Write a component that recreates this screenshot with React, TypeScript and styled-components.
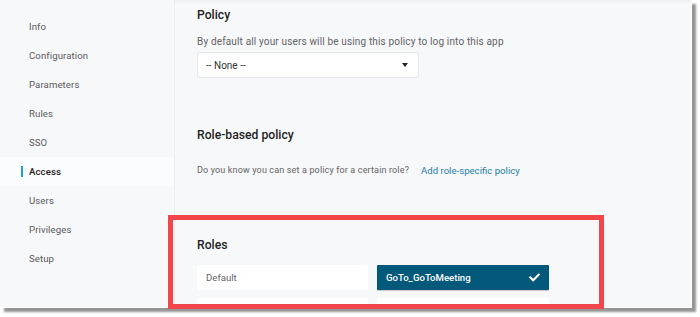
import React from 'react';
import styled, { createGlobalStyle } from 'styled-components';
import { FaCheck } from 'react-icons/fa';

const GlobalStyle = createGlobalStyle`
  html, body {
    margin: 0;
    padding: 0;
    background: #ffffff;
  }
  body {
    font-family: Roboto, "Liberation Sans", Arial, sans-serif;
  }
`;

const Stage = styled.div`
  position: relative;
  width: 700px;
  height: 317px;
  overflow: hidden;
`;

const Frame = styled.div`
  display: flex;
  width: 691px;
  height: 307px;
  border-right: 1px solid #ffffff;
  border-bottom: 1px solid #ffffff;
  box-shadow: 4px 4px 2px rgba(0, 0, 0, 0.42);
  overflow: hidden;
`;

const Sidebar = styled.nav`
  display: flex;
  flex-direction: column;
  flex: 0 0 175px;
  padding-top: 12px;
  background: #f7f8fa;
  border-right: 1px solid #eceef1;
  box-sizing: border-box;
`;

const NavItem = styled.div<{ $active?: boolean }>`
  position: relative;
  display: flex;
  align-items: center;
  height: 29px;
  padding-left: 29px;
  font-size: 9.6px;
  letter-spacing: 0.1px;
  color: ${p => (p.$active ? '#1b1b1b' : '#5a5a5a')};
  font-weight: ${p => (p.$active ? 500 : 400)};
  background: ${p => (p.$active ? '#fbfcfd' : 'transparent')};

  &::before {
    content: '';
    display: ${p => (p.$active ? 'block' : 'none')};
    position: absolute;
    left: 21px;
    top: 9px;
    width: 2px;
    height: 11px;
    background: #1ba3d8;
  }
`;

const Main = styled.main`
  flex: 1;
  display: flex;
  flex-direction: column;
  padding: 7px 0 0 22px;
  background: #f7f8fa;
  box-shadow: inset 0 4px 4px -3px rgba(0, 0, 0, 0.06);

  & > * {
    flex-shrink: 0;
  }
`;

const Heading = styled.h2<{ $top: number }>`
  margin: ${p => p.$top}px 0 0;
  font-size: 12.2px;
  font-weight: 500;
  color: #1e1e1e;
  line-height: 16px;
`;

const Description = styled.p<{ $size?: number }>`
  margin: 0;
  font-size: ${p => p.$size ?? 10}px;
  color: #636363;
  letter-spacing: 0.15px;
  line-height: 14px;
`;

const Select = styled.div`
  display: flex;
  align-items: center;
  justify-content: space-between;
  width: 222px;
  height: 26px;
  margin-top: 3px;
  padding: 0 8px;
  box-sizing: border-box;
  background: #ffffff;
  border: 1px solid #e6e8eb;
  border-radius: 2px;
  font-size: 10px;
  color: #333;
`;

const Caret = styled.span`
  width: 0;
  height: 0;
  border-left: 3px solid transparent;
  border-right: 3px solid transparent;
  border-top: 4px solid #222;
  margin-right: 2px;
`;

const InfoRow = styled.div`
  display: flex;
  align-items: center;
  gap: 12px;
  margin-top: 20px;
`;

const Link = styled.a`
  font-size: 9.6px;
  color: #1d7ea7;
  text-decoration: none;
`;

const RoleGrid = styled.div`
  display: grid;
  grid-template-columns: 171px 172px;
  column-gap: 9px;
  row-gap: 8px;
  margin-top: 12px;
`;

const RoleCard = styled.div<{ $selected?: boolean }>`
  display: flex;
  align-items: center;
  justify-content: space-between;
  height: 25px;
  padding: 0 9px 0 9px;
  box-sizing: border-box;
  border-radius: 1px;
  font-size: 9.6px;
  background: ${p => (p.$selected ? '#03597a' : '#ffffff')};
  color: ${p => (p.$selected ? '#ffffff' : '#666666')};
  font-weight: ${p => (p.$selected ? 500 : 400)};
  box-shadow: ${p => (p.$selected ? '0 1px 1px rgba(0,0,0,0.2)' : 'none')};
`;

const Highlight = styled.div`
  position: absolute;
  left: 168px;
  top: 215px;
  width: 436px;
  height: 94px;
  box-sizing: border-box;
  border: 5px solid #f2464b;
  pointer-events: none;
`;

const navItems = ['Info', 'Configuration', 'Parameters', 'Rules', 'SSO', 'Access', 'Users', 'Privileges', 'Setup'];

export default function App() {
  return (
    <>
      <GlobalStyle />
      <Stage>
        <Frame>
          <Sidebar>
            {navItems.map(item => (
              <NavItem key={item} $active={item === 'Access'}>
                {item}
              </NavItem>
            ))}
          </Sidebar>
          <Main>
            <Heading $top={0}>Policy</Heading>
            <Description style={{ marginTop: 12 }}>
              By default all your users will be using this policy to log into this app
            </Description>
            <Select>
              <span>-- None --</span>
              <Caret />
            </Select>
            <Heading $top={49}>Role-based policy</Heading>
            <InfoRow>
              <Description $size={9}>Do you know you can set a policy for a certain role?</Description>
              <Link href="#">Add role-specific policy</Link>
            </InfoRow>
            <Heading $top={60}>Roles</Heading>
            <RoleGrid>
              <RoleCard>Default</RoleCard>
              <RoleCard $selected>
                GoTo_GoToMeeting
                <FaCheck size={11} />
              </RoleCard>
              <RoleCard />
              <RoleCard />
            </RoleGrid>
          </Main>
        </Frame>
        <Highlight />
      </Stage>
    </>
  );
}
